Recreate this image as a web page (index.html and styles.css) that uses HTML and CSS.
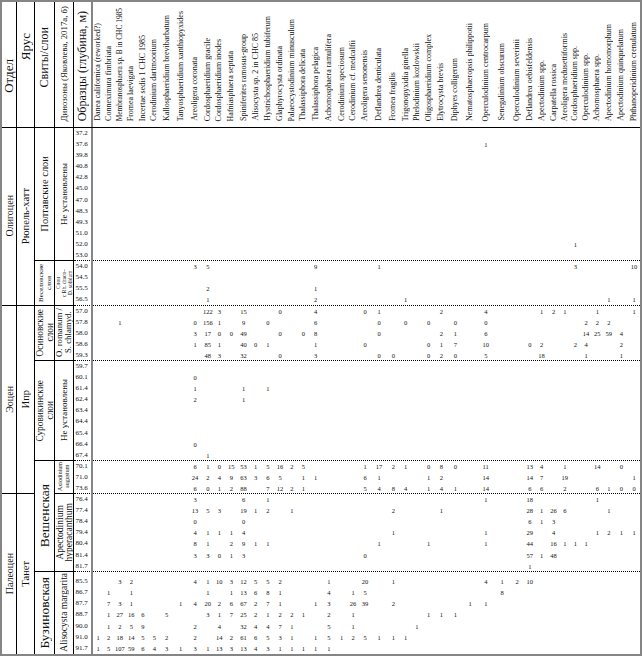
FILE: index.html
```html
<!DOCTYPE html>
<html lang="ru">
<head>
<meta charset="utf-8">
<title>Распределение диноцист по разрезу</title>
<link rel="stylesheet" href="styles.css">
</head>
<body>
<div class="sheet">
  <div class="H ha"><span class="v">Отдел</span></div>
  <div class="H hb"><span class="v">Ярус</span></div>
  <div class="H hc"><span class="v">Свиты/слои</span></div>
  <div class="H hd"><span class="v">Динозоны (Яковлева, 2017а, б)</span></div>
  <div class="hr">
    <div class="sp dep"><span class="v">Образцы (глубина, м)</span></div>
    <div class="sp"><span class="v">Danea californica (reworked?)</span></div>
    <div class="sp"><span class="v">Conneximura fimbriata</span></div>
    <div class="sp sm"><span class="v">Membranosphaera sp. B in CHC 1985</span></div>
    <div class="sp"><span class="v">Fromea laevigata</span></div>
    <div class="sp"><span class="v">Incertae sedis 1 CHC 1985</span></div>
    <div class="sp"><span class="v">Cerodinium dartmoorium</span></div>
    <div class="sp"><span class="v">Kallosphaeridium brevibarbatum</span></div>
    <div class="sp"><span class="v">Tanyosphaeridium xanthiopyxides</span></div>
    <div class="sp"><span class="v">Areoligera coronata</span></div>
    <div class="sp"><span class="v">Cordosphaeridium gracile</span></div>
    <div class="sp"><span class="v">Cordosphaeridium inodes</span></div>
    <div class="sp"><span class="v">Hafniasphaera septata</span></div>
    <div class="sp"><span class="v">Spiniferites ramosus-group</span></div>
    <div class="sp"><span class="v">Alisocysta sp. 2 in CHC 85</span></div>
    <div class="sp"><span class="v">Hystrichosphaeridium tubiferum</span></div>
    <div class="sp"><span class="v">Glaphyrocysta ordinata</span></div>
    <div class="sp"><span class="v">Palaeocystodinium minusculum</span></div>
    <div class="sp"><span class="v">Thalassiphora delicata</span></div>
    <div class="sp"><span class="v">Thalassiphora pelagica</span></div>
    <div class="sp"><span class="v">Achomosphaera ramulifera</span></div>
    <div class="sp"><span class="v">Cerodinium speciosum</span></div>
    <div class="sp"><span class="v">Cerodinium cf. medcalfii</span></div>
    <div class="sp"><span class="v">Areoligera senonensis</span></div>
    <div class="sp"><span class="v">Deflandrea denticulata</span></div>
    <div class="sp"><span class="v">Fromea fragilis</span></div>
    <div class="sp"><span class="v">Trigonopyxidia ginella</span></div>
    <div class="sp"><span class="v">Phelodinium kozlowskii</span></div>
    <div class="sp"><span class="v">Oligosphaeridium complex</span></div>
    <div class="sp"><span class="v">Elytrocysta brevis</span></div>
    <div class="sp"><span class="v">Diphyes colligerum</span></div>
    <div class="sp"><span class="v">Nematosphaeropsis philippotii</span></div>
    <div class="sp"><span class="v">Operculodinium centrocarpum</span></div>
    <div class="sp"><span class="v">Senegalinium obscurum</span></div>
    <div class="sp"><span class="v">Operculodinium severinii</span></div>
    <div class="sp"><span class="v">Deflandrea oebisfeldensis</span></div>
    <div class="sp"><span class="v">Apectodinium spp.</span></div>
    <div class="sp"><span class="v">Carpatella rossica</span></div>
    <div class="sp"><span class="v">Areoligera medusettiformis</span></div>
    <div class="sp"><span class="v">Cordosphaeridium spp.</span></div>
    <div class="sp"><span class="v">Operculodinium spp.</span></div>
    <div class="sp"><span class="v">Achomosphaera spp.</span></div>
    <div class="sp"><span class="v">Apectodinium homomorphum</span></div>
    <div class="sp"><span class="v">Apectodinium quinquelatum</span></div>
    <div class="sp"><span class="v">Phthanoperidinium crenulatum</span></div>
  </div>

  <div class="L ca s16 fa"><span class="v">Олигоцен</span></div>
  <div class="L cb s16 fb"><span class="v">Рюпель-хатт</span></div>
  <div class="L cc s12 fc"><span class="v">Полтавские слои</span></div>
  <div class="L cd s12 fd"><span class="v">Не установлены</span></div>
  <div class="r"><i>37.2</i></div>
  <div class="r"><i>37.6</i><i class="c32">1</i></div>
  <div class="r"><i>39.8</i></div>
  <div class="r"><i>40.8</i></div>
  <div class="r"><i>42.8</i></div>
  <div class="r"><i>45.0</i></div>
  <div class="r"><i>47.0</i></div>
  <div class="r"><i>48.3</i></div>
  <div class="r"><i>49.3</i></div>
  <div class="r"><i>51.0</i></div>
  <div class="r"><i>52.0</i><i class="c39">1</i></div>
  <div class="r end"><i>53.0</i></div>

  <div class="L cc s4 fves"><span class="v">Веселовские<br>слои</span></div>
  <div class="L cd s4 fdz"><span class="v">Слои<br>c Rh. draco–<br>D. solidum</span></div>
  <div class="r"><i>54.0</i><i class="c9">3</i><i class="c10">5</i><i class="c19">9</i><i class="c24">1</i><i class="c39">3</i><i class="c44">10</i></div>
  <div class="r"><i>54.5</i></div>
  <div class="r"><i>55.5</i><i class="c10">2</i><i class="c19">1</i></div>
  <div class="r end"><i>56.5</i><i class="c10">1</i><i class="c19">2</i><i class="c26">1</i><i class="c42">1</i><i class="c44">1</i></div>

  <div class="L ca s17 fa"><span class="v">Эоцен</span></div>
  <div class="L cb s17 fb"><span class="v">Ипр</span></div>
  <div class="L cc s5 fc2"><span class="v">Осиновские<br>слои</span></div>
  <div class="L cd s5 fdr"><span class="v">O. romanum /<br>S. chlamyd.</span></div>
  <div class="r"><i>57.0</i><i class="c10">122</i><i class="c11">3</i><i class="c13">15</i><i class="c16">0</i><i class="c19">4</i><i class="c23">0</i><i class="c24">1</i><i class="c29">2</i><i class="c32">4</i><i class="c36">1</i><i class="c37">2</i><i class="c38">1</i><i class="c41">1</i><i class="c44">1</i></div>
  <div class="r"><i>57.8</i><i class="c3">1</i><i class="c9">0</i><i class="c10">156</i><i class="c11">1</i><i class="c13">9</i><i class="c15">0</i><i class="c19">6</i><i class="c24">0</i><i class="c26">0</i><i class="c28">0</i><i class="c30">0</i><i class="c32">0</i><i class="c40">2</i><i class="c41">2</i><i class="c42">2</i></div>
  <div class="r"><i>58.0</i><i class="c9">3</i><i class="c10">17</i><i class="c11">0</i><i class="c12">0</i><i class="c13">49</i><i class="c16">0</i><i class="c18">0</i><i class="c19">8</i><i class="c24">0</i><i class="c29">2</i><i class="c30">1</i><i class="c32">6</i><i class="c40">14</i><i class="c41">25</i><i class="c42">59</i><i class="c43">4</i></div>
  <div class="r"><i>58.6</i><i class="c9">1</i><i class="c10">85</i><i class="c11">1</i><i class="c13">40</i><i class="c14">0</i><i class="c15">1</i><i class="c19">1</i><i class="c23">0</i><i class="c28">0</i><i class="c29">1</i><i class="c30">7</i><i class="c32">10</i><i class="c35">0</i><i class="c36">2</i><i class="c39">2</i><i class="c40">4</i><i class="c43">2</i></div>
  <div class="r end"><i>59.3</i><i class="c10">48</i><i class="c11">3</i><i class="c13">32</i><i class="c16">0</i><i class="c19">3</i><i class="c24">0</i><i class="c25">0</i><i class="c28">0</i><i class="c29">2</i><i class="c30">0</i><i class="c32">5</i><i class="c36">18</i><i class="c40">1</i><i class="c43">1</i></div>

  <div class="L cc s9 fc2"><span class="v">Суровикинские<br>слои</span></div>
  <div class="L cd s9 fd"><span class="v">Не установлены</span></div>
  <div class="r"><i>59.7</i></div>
  <div class="r"><i>60.1</i><i class="c9">0</i></div>
  <div class="r"><i>61.4</i><i class="c9">1</i><i class="c13">1</i><i class="c15">1</i></div>
  <div class="r"><i>62.4</i><i class="c9">2</i><i class="c13">1</i></div>
  <div class="r"><i>63.4</i></div>
  <div class="r"><i>64.4</i></div>
  <div class="r"><i>65.4</i></div>
  <div class="r"><i>66.4</i><i class="c9">0</i></div>
  <div class="r end"><i>67.4</i><i class="c10">1</i></div>

  <div class="L cc s10 fcl"><span class="v">Вешенская</span></div>
  <div class="L cd s3 fax"><span class="v">Axiodinium<br>augustum</span></div>
  <div class="r"><i>70.1</i><i class="c9">6</i><i class="c10">1</i><i class="c11">0</i><i class="c12">15</i><i class="c13">53</i><i class="c14">1</i><i class="c15">5</i><i class="c16">16</i><i class="c17">2</i><i class="c18">5</i><i class="c23">1</i><i class="c24">17</i><i class="c25">2</i><i class="c26">1</i><i class="c28">0</i><i class="c29">8</i><i class="c30">0</i><i class="c32">11</i><i class="c35">13</i><i class="c36">4</i><i class="c38">1</i><i class="c41">14</i><i class="c43">0</i></div>
  <div class="r"><i>71.0</i><i class="c9">24</i><i class="c10">2</i><i class="c11">4</i><i class="c12">9</i><i class="c13">63</i><i class="c14">3</i><i class="c15">6</i><i class="c16">5</i><i class="c18">1</i><i class="c19">1</i><i class="c23">6</i><i class="c24">1</i><i class="c28">1</i><i class="c29">2</i><i class="c32">14</i><i class="c35">14</i><i class="c36">7</i><i class="c38">19</i><i class="c44">1</i></div>
  <div class="r end"><i>73.6</i><i class="c9">6</i><i class="c10">0</i><i class="c11">1</i><i class="c12">2</i><i class="c13">88</i><i class="c15">7</i><i class="c16">12</i><i class="c17">2</i><i class="c18">1</i><i class="c23">5</i><i class="c24">4</i><i class="c25">8</i><i class="c26">4</i><i class="c28">1</i><i class="c29">4</i><i class="c30">1</i><i class="c32">14</i><i class="c35">6</i><i class="c36">6</i><i class="c38">2</i><i class="c41">6</i><i class="c42">1</i><i class="c43">0</i><i class="c44">0</i></div>

  <div class="L ca s14 fa nb"><span class="v">Палеоцен</span></div>
  <div class="L cb s14 fb nb"><span class="v">Танет</span></div>
  <div class="L cd s7 fap"><span class="v">Apectodinium<br>hyperacanthum</span></div>
  <div class="r"><i>76.4</i><i class="c9">3</i><i class="c13">6</i><i class="c15">1</i><i class="c32">1</i><i class="c35">18</i><i class="c41">1</i></div>
  <div class="r"><i>77.4</i><i class="c9">13</i><i class="c10">5</i><i class="c11">3</i><i class="c13">19</i><i class="c14">1</i><i class="c15">2</i><i class="c17">1</i><i class="c25">2</i><i class="c29">1</i><i class="c35">28</i><i class="c36">1</i><i class="c37">26</i><i class="c38">6</i><i class="c42">1</i></div>
  <div class="r"><i>78.4</i><i class="c9">0</i><i class="c13">0</i><i class="c35">6</i><i class="c36">1</i><i class="c37">3</i></div>
  <div class="r"><i>79.4</i><i class="c9">4</i><i class="c10">1</i><i class="c11">1</i><i class="c12">1</i><i class="c13">4</i><i class="c25">1</i><i class="c32">1</i><i class="c35">29</i><i class="c37">4</i><i class="c41">1</i><i class="c42">2</i><i class="c43">1</i><i class="c44">1</i></div>
  <div class="r"><i>80.4</i><i class="c9">8</i><i class="c10">1</i><i class="c12">2</i><i class="c13">9</i><i class="c14">1</i><i class="c15">1</i><i class="c24">1</i><i class="c28">1</i><i class="c32">1</i><i class="c35">44</i><i class="c37">16</i><i class="c38">1</i><i class="c39">1</i><i class="c40">1</i></div>
  <div class="r"><i>81.4</i><i class="c9">3</i><i class="c10">3</i><i class="c11">0</i><i class="c12">1</i><i class="c13">3</i><i class="c23">0</i><i class="c35">57</i><i class="c36">1</i><i class="c37">48</i></div>
  <div class="r end"><i>81.7</i><i class="c35">1</i></div>

  <div class="L cc s7 fcl nb"><span class="v">Бузиновская</span></div>
  <div class="L cd s7 fal nb"><span class="v">Alisocysta margarita</span></div>
  <div class="r tall"><i>85.5</i><i class="c3">3</i><i class="c4">2</i><i class="c9">4</i><i class="c10">1</i><i class="c11">10</i><i class="c12">3</i><i class="c13">12</i><i class="c14">5</i><i class="c15">5</i><i class="c16">2</i><i class="c20">1</i><i class="c23">20</i><i class="c25">1</i><i class="c32">4</i><i class="c33">1</i><i class="c34">2</i><i class="c35">10</i></div>
  <div class="r"><i>86.7</i><i class="c2">1</i><i class="c4">1</i><i class="c10">1</i><i class="c12">1</i><i class="c13">13</i><i class="c14">6</i><i class="c15">8</i><i class="c16">1</i><i class="c20">4</i><i class="c22">1</i><i class="c23">5</i><i class="c33">8</i></div>
  <div class="r"><i>87.7</i><i class="c2">7</i><i class="c3">3</i><i class="c4">1</i><i class="c8">1</i><i class="c9">4</i><i class="c10">20</i><i class="c11">2</i><i class="c12">6</i><i class="c13">67</i><i class="c14">2</i><i class="c15">7</i><i class="c16">1</i><i class="c19">1</i><i class="c20">3</i><i class="c22">26</i><i class="c23">39</i><i class="c25">2</i><i class="c31">1</i><i class="c32">1</i></div>
  <div class="r"><i>88.7</i><i class="c2">1</i><i class="c3">27</i><i class="c4">16</i><i class="c5">6</i><i class="c7">5</i><i class="c10">3</i><i class="c11">1</i><i class="c12">7</i><i class="c13">25</i><i class="c14">2</i><i class="c15">1</i><i class="c16">2</i><i class="c17">2</i><i class="c18">1</i><i class="c20">2</i><i class="c22">1</i><i class="c28">1</i><i class="c29">1</i><i class="c30">1</i></div>
  <div class="r"><i>90.0</i><i class="c2">1</i><i class="c3">2</i><i class="c4">5</i><i class="c5">9</i><i class="c9">2</i><i class="c11">4</i><i class="c13">32</i><i class="c14">4</i><i class="c15">4</i><i class="c16">7</i><i class="c17">1</i><i class="c20">5</i><i class="c22">1</i><i class="c27">1</i></div>
  <div class="r"><i>91.0</i><i class="c1">1</i><i class="c2">2</i><i class="c3">18</i><i class="c4">14</i><i class="c5">5</i><i class="c6">5</i><i class="c7">2</i><i class="c9">2</i><i class="c11">14</i><i class="c12">2</i><i class="c13">61</i><i class="c14">6</i><i class="c15">5</i><i class="c16">3</i><i class="c17">1</i><i class="c19">1</i><i class="c20">5</i><i class="c21">1</i><i class="c22">2</i><i class="c23">5</i><i class="c24">1</i><i class="c25">1</i><i class="c26">1</i></div>
  <div class="r"><i>91.7</i><i class="c1">1</i><i class="c2">5</i><i class="c3">107</i><i class="c4">59</i><i class="c5">6</i><i class="c6">4</i><i class="c7">3</i><i class="c8">1</i><i class="c9">3</i><i class="c10">1</i><i class="c11">13</i><i class="c12">3</i><i class="c13">13</i><i class="c14">4</i><i class="c15">3</i><i class="c16">1</i><i class="c17">1</i><i class="c18">1</i><i class="c19">1</i><i class="c20">1</i></div>
</div>
</body>
</html>
```
FILE: styles.css
```css
* { box-sizing: border-box; }
html, body { margin: 0; padding: 0; background: #fff; }
body { font-family: "Liberation Serif", "Times New Roman", serif; color: #111; }

.sheet {
  --rh: 11.1px;
  --cols: 19px 10px 11px 11.5px 11.5px 11.5px 11.5px 13px 15px 14px 11.5px 11.5px 12.5px 12px 12px 12.5px 12px 11.5px 11.5px 13px 13.5px 12px 11px 13px 15px 13.5px 11px 11.5px 12px 13.5px 14.5px 15px 16.5px 16px 14px 11.5px 12px 12px 10.5px 10.5px 11px 11.5px 11.5px 13.5px 12px;
  display: grid;
  grid-template-columns: 15px 18px 20px 19px 566px;
  grid-template-rows: 126px repeat(40, var(--rh)) 15.5px repeat(6, var(--rh));
  width: 642px;
  border: 2px solid #858585;
}

.v {
  writing-mode: vertical-rl;
  transform: rotate(180deg);
  white-space: nowrap;
  text-align: center;
}

/* header */
.H {
  border-right: 1px solid #000;
  border-bottom: 1px solid #000;
  display: flex;
  align-items: center;
  justify-content: center;
  overflow: hidden;
}
.ha { grid-column: 1; font-size: 13px; padding-top: 22px; }
.hb { grid-column: 2; font-size: 13px; padding-bottom: 36px; }
.hc { grid-column: 3; font-size: 12px; padding-bottom: 14px; }
.hd { grid-column: 4; font-size: 8.8px; align-items: flex-end; padding-bottom: 6px; }

.hr {
  grid-column: 5;
  display: grid;
  grid-template-columns: var(--cols);
  border-bottom: 1px solid #000;
}
.sp {
  display: flex;
  flex-direction: column;
  justify-content: flex-end;
  align-items: center;
  padding-bottom: 6px;
  font-size: 8px;
  line-height: 1;
}
.sp.sm { font-size: 7.4px; }
.sp.dep {
  font-size: 12px;
  border-right: 2px solid #858585;
  padding-right: 2px;
}

/* left hierarchy cells */
.L {
  border-right: 1px solid #000;
  border-bottom: 1px solid #000;
  display: flex;
  align-items: center;
  justify-content: center;
  overflow: hidden;
}
.L.nb { border-bottom: 0; }
.ca { grid-column: 1; }
.cb { grid-column: 2; }
.cc { grid-column: 3; }
.cd { grid-column: 4; }
.s3 { grid-row: span 3; }
.s4 { grid-row: span 4; }
.s5 { grid-row: span 5; }
.s7 { grid-row: span 7; }
.s9 { grid-row: span 9; }
.s10 { grid-row: span 10; }
.s12 { grid-row: span 12; }
.s14 { grid-row: span 14; }
.s16 { grid-row: span 16; }
.s17 { grid-row: span 17; }

.fa { font-size: 10px; }
.fb { font-size: 10.5px; }
.fc { font-size: 10.5px; }
.fcl { font-size: 13.5px; }
.fc2 { font-size: 9.3px; line-height: 10px; }
.fves { font-size: 7px; line-height: 8px; }
.fd { font-size: 9px; }
.fdz { font-size: 5.5px; line-height: 6px; }
.fdr { font-size: 8.8px; line-height: 9px; }
.fax { font-size: 6px; line-height: 7px; }
.fap { font-size: 9.5px; line-height: 8.5px; }
.fal { font-size: 9.5px; }

/* data rows */
.r {
  grid-column: 5;
  display: grid;
  grid-template-columns: var(--cols);
  font-size: 6.5px;
  line-height: var(--rh);
  text-align: center;
}
.r i { font-style: normal; white-space: nowrap; }
.r i:first-child {
  grid-column: 1;
  font-size: 7px;
  border-right: 2px solid #858585;
  padding-right: 2px;
}
.r.end { border-bottom: 1px dotted #000; }
.r.tall i { padding-top: 4.4px; }

.c1 { grid-column: 2; } .c2 { grid-column: 3; } .c3 { grid-column: 4; } .c4 { grid-column: 5; }
.c5 { grid-column: 6; } .c6 { grid-column: 7; } .c7 { grid-column: 8; } .c8 { grid-column: 9; }
.c9 { grid-column: 10; } .c10 { grid-column: 11; } .c11 { grid-column: 12; } .c12 { grid-column: 13; }
.c13 { grid-column: 14; } .c14 { grid-column: 15; } .c15 { grid-column: 16; } .c16 { grid-column: 17; }
.c17 { grid-column: 18; } .c18 { grid-column: 19; } .c19 { grid-column: 20; } .c20 { grid-column: 21; }
.c21 { grid-column: 22; } .c22 { grid-column: 23; } .c23 { grid-column: 24; } .c24 { grid-column: 25; }
.c25 { grid-column: 26; } .c26 { grid-column: 27; } .c27 { grid-column: 28; } .c28 { grid-column: 29; }
.c29 { grid-column: 30; } .c30 { grid-column: 31; } .c31 { grid-column: 32; } .c32 { grid-column: 33; }
.c33 { grid-column: 34; } .c34 { grid-column: 35; } .c35 { grid-column: 36; } .c36 { grid-column: 37; }
.c37 { grid-column: 38; } .c38 { grid-column: 39; } .c39 { grid-column: 40; } .c40 { grid-column: 41; }
.c41 { grid-column: 42; } .c42 { grid-column: 43; } .c43 { grid-column: 44; } .c44 { grid-column: 45; }
```
